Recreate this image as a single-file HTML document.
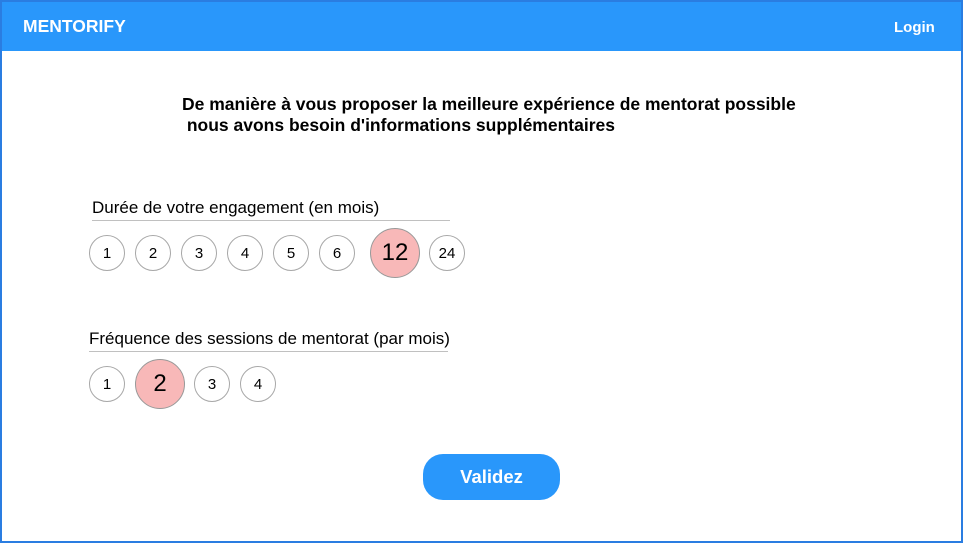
<!DOCTYPE html>
<html><head><meta charset="utf-8"><style>
html,body{margin:0;padding:0;width:963px;height:543px;overflow:hidden;background:#fff;font-family:"Liberation Sans",Arial,sans-serif;}
.frame{position:absolute;left:0;top:0;width:959px;height:539px;border:2px solid #2a7de1;}
.hdr{position:absolute;left:2px;top:2px;width:959px;height:49px;background:#2997fb;}
.abs{position:absolute;white-space:nowrap;}
.c{position:absolute;box-sizing:border-box;border:1px solid #a8a8a8;border-radius:50%;background:#fff;display:flex;align-items:center;justify-content:center;font-size:15px;color:#000;}
.s{width:36px;height:36px;}
.b{width:50px;height:50px;background:#f8b8b8;font-size:24px;border-color:#999;}
.line{position:absolute;height:1px;background:#c0c0c0;}
</style></head><body>
<div class="hdr"></div>
<div class="frame"></div>
<div class="abs" style="left:23px;top:16px;color:#fff;font-weight:bold;font-size:17.5px;">MENTORIFY</div>
<div class="abs" style="left:894px;top:19px;color:#fff;font-weight:bold;font-size:15px;">Login</div>
<div class="abs" style="left:182px;top:94px;font-weight:bold;font-size:17.5px;line-height:21px;">De manière à vous proposer la meilleure expérience de mentorat possible<br>&nbsp;nous avons besoin d'informations supplémentaires</div>
<div class="abs" style="left:92px;top:198px;font-size:17px;">Durée de votre engagement (en mois)</div>
<div class="line" style="left:92px;top:220px;width:358px;"></div>
<div class="c s" style="left:89px;top:235px;">1</div>
<div class="c s" style="left:135px;top:235px;">2</div>
<div class="c s" style="left:181px;top:235px;">3</div>
<div class="c s" style="left:227px;top:235px;">4</div>
<div class="c s" style="left:273px;top:235px;">5</div>
<div class="c s" style="left:319px;top:235px;">6</div>
<div class="c b" style="left:370px;top:228px;">12</div>
<div class="c s" style="left:429px;top:235px;">24</div>
<div class="abs" style="left:89px;top:329px;font-size:17px;">Fréquence des sessions de mentorat (par mois)</div>
<div class="line" style="left:89px;top:351px;width:359px;"></div>
<div class="c s" style="left:89px;top:366px;">1</div>
<div class="c b" style="left:135px;top:359px;">2</div>
<div class="c s" style="left:194px;top:366px;">3</div>
<div class="c s" style="left:240px;top:366px;">4</div>
<div class="abs" style="left:423px;top:454px;width:137px;height:46px;border-radius:20px;background:#2997fb;color:#fff;font-weight:bold;font-size:18.5px;display:flex;align-items:center;justify-content:center;">Validez</div>
</body></html>
